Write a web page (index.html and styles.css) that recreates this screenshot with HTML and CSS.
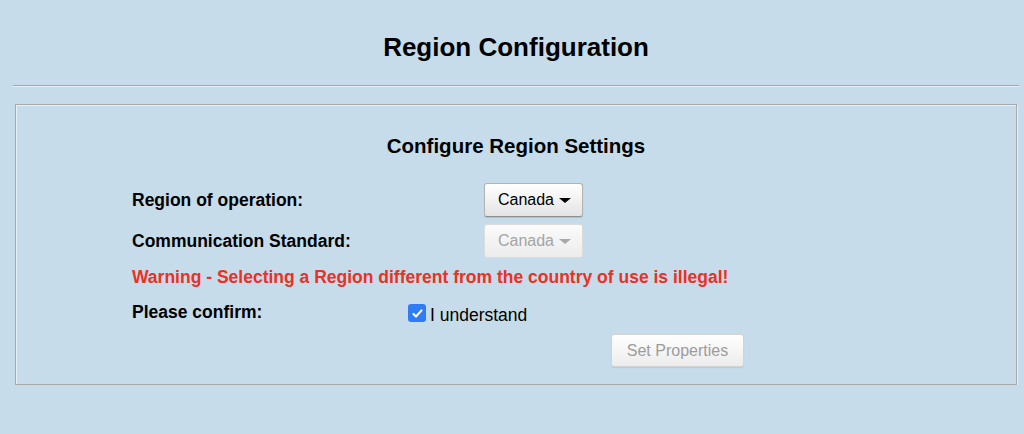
FILE: index.html
```html
<!DOCTYPE html>
<html>
<head>
<meta charset="utf-8">
<link rel="stylesheet" href="styles.css">
</head>
<body>
<div class="page">
  <h1 class="title">Region Configuration</h1>
  <div class="rule"></div>
  <div class="panel">
    <h2 class="subtitle">Configure Region Settings</h2>
    <div class="form">
      <div class="row">
        <div class="label">Region of operation:</div>
        <div class="ctrl"><button class="select">Canada <span class="caret"></span></button></div>
      </div>
      <div class="row row-2">
        <div class="label">Communication Standard:</div>
        <div class="ctrl"><button class="select disabled">Canada <span class="caret"></span></button></div>
      </div>
      <div class="warning">Warning - Selecting a Region different from the country of use is illegal!</div>
      <div class="row row-confirm">
        <div class="label">Please confirm:</div>
        <label class="check"><span class="box"><svg viewBox="0 0 16 16" width="13" height="13"><path d="M3 8.5l3.2 3.2L13 4.2" fill="none" stroke="#fff" stroke-width="2.6" stroke-linecap="round" stroke-linejoin="round"/></svg></span>I understand</label>
      </div>
      <div class="actions"><button class="btn">Set Properties</button></div>
    </div>
  </div>
</div>
</body>
</html>
```

FILE: styles.css
```css
html, body {
  margin: 0;
  padding: 0;
  background: #c6dcea;
}
body {
  font-family: "Liberation Sans", Arial, sans-serif;
  color: #000;
}
.page {
  padding: 0 5px 0 13px;
}
.title {
  margin: 0;
  padding-top: 32px;
  text-align: center;
  font-size: 26px;
  line-height: 30px;
  font-weight: bold;
}
.rule {
  height: 0;
  border-top: 1px solid #a3a7aa;
  border-bottom: 1px solid #e6eef3;
  margin-top: 23px;
}
.panel {
  margin: 17px 2px 0 2px;
  border: 1px solid #a7a9ab;
  box-shadow: inset 1px 1px 0 #e9f0f5, 1px 1px 0 #e9f0f5;
  height: 281px;
  box-sizing: border-box;
}
.subtitle {
  margin: 0;
  padding-top: 29px;
  text-align: center;
  font-size: 20.5px;
  line-height: 24px;
  font-weight: bold;
}
.form {
  padding-left: 116px;
  margin-top: 25px;
}
.row {
  display: flex;
  align-items: center;
  height: 34px;
}
.row-2 {
  margin-top: 7px;
}
.label {
  width: 352px;
  font-size: 17.5px;
  font-weight: bold;
}
.select {
  width: 99px;
  height: 34px;
  border: 1px solid #b3b3b3;
  border-bottom-color: #8f8f8f;
  border-radius: 3px;
  background: linear-gradient(#ffffff, #e4e4e4);
  font-family: "Liberation Sans", Arial, sans-serif;
  font-size: 16px;
  color: #000;
  padding: 0 0 0 2px;
  display: flex;
  align-items: center;
  justify-content: center;
  gap: 5px;
  box-shadow: 0 1px 1px rgba(0,0,0,0.12);
}
.caret {
  width: 0;
  height: 0;
  border-left: 6px solid transparent;
  border-right: 6px solid transparent;
  border-top: 5px solid #000;
  margin-top: 1px;
}
.select.disabled {
  color: #a5a5a5;
  border-color: #dcdcdc;
  background: linear-gradient(#fbfbfb, #ececec);
  box-shadow: none;
}
.select.disabled .caret {
  border-top-color: #a8a8a8;
}
.warning {
  color: #ec3023;
  font-size: 17.5px;
  font-weight: bold;
  margin-top: 8px;
  height: 22px;
  line-height: 22px;
}
.row-confirm {
  align-items: flex-start;
  height: auto;
  margin-top: 13px;
}
.row-confirm .label {
  width: 276px;
  line-height: 22px;
}
.check {
  display: flex;
  align-items: center;
  font-size: 17.5px;
  margin-top: 2px;
  line-height: 24px;
}
.box {
  width: 18px;
  height: 18px;
  border-radius: 3px;
  background: #2f7cf4;
  display: inline-flex;
  align-items: center;
  justify-content: center;
  margin-right: 4px;
  margin-top: -4px;
}
.actions {
  padding-left: 479px;
  margin-top: 7px;
}
.btn {
  width: 133px;
  height: 33px;
  border: 1px solid #d3d3d3;
  border-radius: 3px;
  background: linear-gradient(#ffffff, #ececec);
  color: #9c9c9c;
  font-family: "Liberation Sans", Arial, sans-serif;
  font-size: 16px;
  box-shadow: 0 1px 1px rgba(0,0,0,0.08);
}
```
